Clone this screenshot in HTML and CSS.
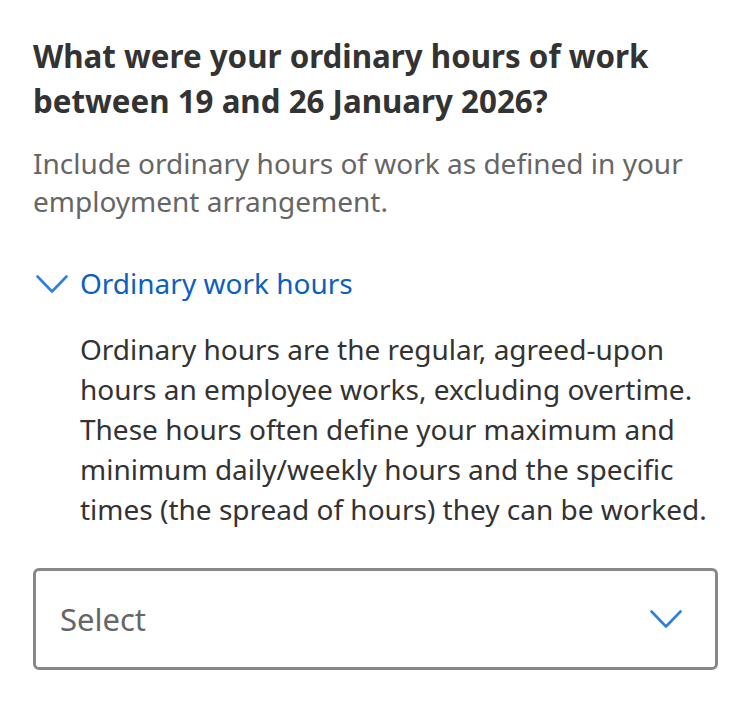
FILE: index.html
```html
<!DOCTYPE html>
<html lang="en">
<head>
<meta charset="utf-8">
<link rel="stylesheet" href="styles.css">
</head>
<body>
<main class="question">
  <h1 class="q-title">What were your ordinary hours of work between 19 and 26 January 2026?</h1>
  <p class="q-hint">Include ordinary hours of work as defined in your employment arrangement.</p>
  <div class="details">
    <div class="details-summary">
      <svg class="chev chev-link" viewBox="0 0 32 19" width="32" height="19" aria-hidden="true"><path d="M1.5 1.5 L16 16.5 L30.5 1.5" fill="none" stroke="#2f7fdf" stroke-width="2.6" stroke-linecap="round" stroke-linejoin="round"/></svg>
      <span class="summary-text">Ordinary work hours</span>
    </div>
    <p class="details-body">Ordinary hours are the regular, agreed-upon hours an employee works, excluding overtime. These hours often define your maximum and minimum daily/weekly hours and the specific times (the spread of hours) they can be worked.</p>
  </div>
  <div class="select">
    <span class="select-text">Select</span>
    <svg class="chev" viewBox="0 0 32 19" width="32" height="19" aria-hidden="true"><path d="M1.5 1.5 L16 16.5 L30.5 1.5" fill="none" stroke="#2f7fdf" stroke-width="2.6" stroke-linecap="round" stroke-linejoin="round"/></svg>
  </div>
</main>
</body>
</html>
```
FILE: styles.css
```css
html, body {
  margin: 0;
  padding: 0;
  background: #ffffff;
}
body {
  font-family: "Noto Sans", "Open Sans", sans-serif;
  color: #333333;
}
.question {
  padding: 34px 33px 0 33px;
  width: 685px;
}
.q-title {
  margin: 0;
  font-size: 31.3px;
  font-weight: 700;
  line-height: 45px;
  color: #333333;
}
.q-hint {
  margin: 20px 0 0 0;
  font-size: 28px;
  line-height: 38px;
  color: #666666;
}
.details {
  margin-top: 43px;
}
.details-summary {
  display: flex;
  align-items: center;
  gap: 12px;
  height: 40px;
  padding-left: 3px;
}
.chev-link {
  margin-top: 3px;
}
.summary-text {
  font-size: 28px;
  line-height: 40px;
  color: #0a60bf;
}
.details-body {
  margin: 26px 0 0 47px;
  font-size: 28px;
  line-height: 40px;
  color: #333333;
}
.select {
  margin-top: 39px;
  height: 96px;
  border: 3px solid #888888;
  border-radius: 6px;
  display: flex;
  align-items: center;
  justify-content: space-between;
  padding: 0 33px 0 24px;
}
.select-text {
  font-size: 31px;
  color: #666666;
}
.chev {
  display: block;
  flex: none;
}
```
